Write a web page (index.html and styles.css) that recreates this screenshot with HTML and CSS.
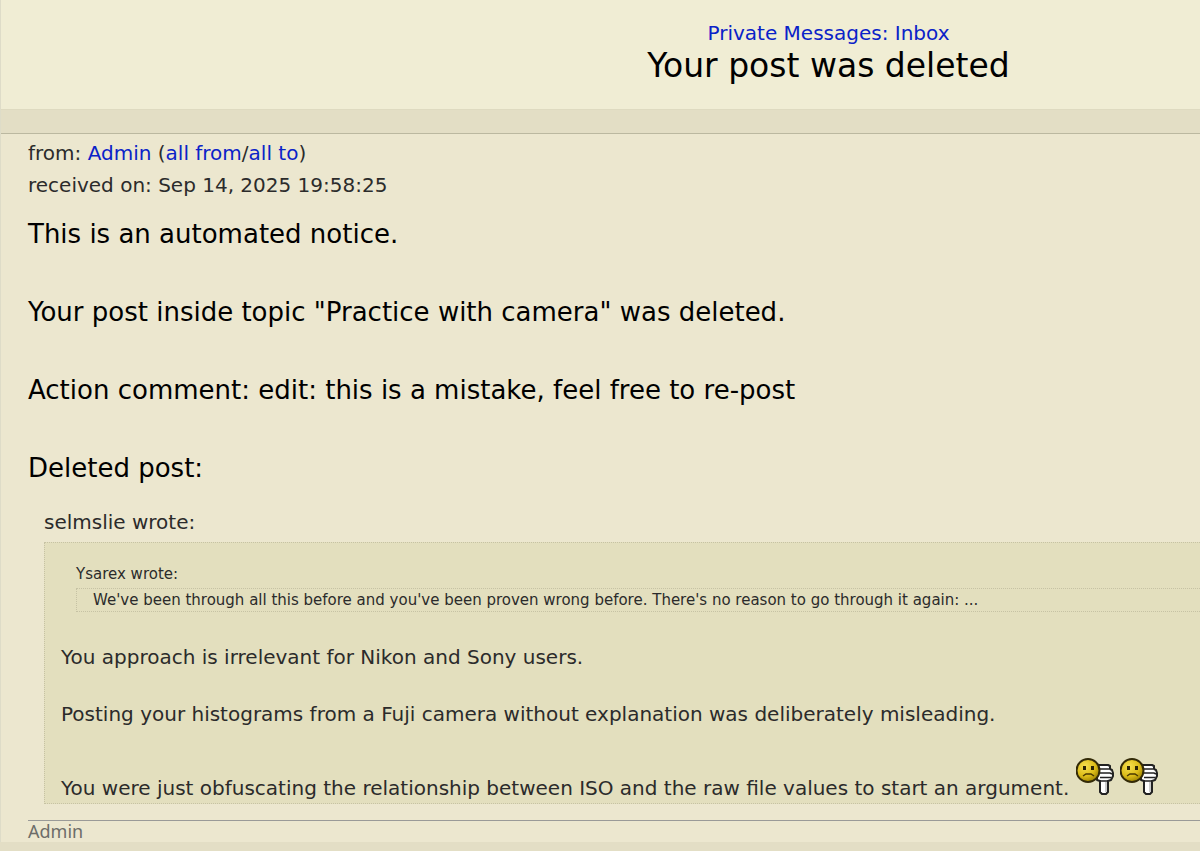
FILE: index.html
```html
<!DOCTYPE html>
<html lang="en">
<head>
<meta charset="utf-8">
<title>Your post was deleted</title>
<link rel="stylesheet" href="styles.css">
</head>
<body>
<svg class="sprites" aria-hidden="true">
  <defs>
    <radialGradient id="face" cx="38%" cy="32%" r="72%">
      <stop offset="0" stop-color="#f6e050"/>
      <stop offset="0.6" stop-color="#dcbc18"/>
      <stop offset="1" stop-color="#9a8000"/>
    </radialGradient>
    <symbol id="thumbs-down" viewBox="0 0 38 39">
      <path d="M21 8h11l2 1v3l2 1 1 3v3l-2 4-3 1v11l-2 2h-4l-2-2V24l-3-1V8z" fill="#fff" stroke="#222" stroke-width="2" stroke-linejoin="round"/>
      <path d="M21 12h12M22 16h12l2 1M24 20.500h11M23 24h9" fill="none" stroke="#222" stroke-width="1.500"/>
      <path d="M30 25v10" stroke="#bbb" stroke-width="1.500"/>
      <circle cx="12" cy="13.500" r="11.500" fill="url(#face)" stroke="#332a08" stroke-width="2"/>
      <path d="M7 9h3v4H7zM15 9h3v4h-3z" fill="#2b2305"/>
      <path d="M7 19l3-2h5l3 2" fill="none" stroke="#4a3900" stroke-width="1.500"/>
    </symbol>
  </defs>
</svg>
<div class="page">
  <header class="header">
    <a class="crumb" href="#inbox">Private Messages: Inbox</a>
    <h1 class="title">Your post was deleted</h1>
  </header>
  <div class="strip"></div>
  <main class="message">
    <div class="meta">
      <div>from: <a href="#admin">Admin</a> (<a href="#from">all from</a>/<a href="#to">all to</a>)</div>
      <div>received on: Sep 14, 2025 19:58:25</div>
    </div>
    <div class="notice">
      <p>This is an automated notice.</p>
      <p>Your post inside topic "Practice with camera" was deleted.</p>
      <p>Action comment: edit: this is a mistake, feel free to re-post</p>
      <p>Deleted post:</p>
    </div>
    <div class="quoted">
      <div class="author">selmslie wrote:</div>
      <blockquote class="quote">
        <div class="nested">
          <div>Ysarex wrote:</div>
          <blockquote class="nested-quote">We've been through all this before and you've been proven wrong before. There's no reason to go through it again: ...</blockquote>
        </div>
        <div class="reply">
          <p>You approach is irrelevant for Nikon and Sony users.</p>
          <p>Posting your histograms from a Fuji camera without explanation was deliberately misleading.</p>
          <p>You were just obfuscating the relationship between ISO and the raw file values to start an argument. <svg class="emote" role="img" aria-label="thumbs down"><use href="#thumbs-down"/></svg> <svg class="emote" role="img" aria-label="thumbs down"><use href="#thumbs-down"/></svg></p>
        </div>
      </blockquote>
    </div>
    <footer class="signature">Admin</footer>
  </main>
</div>
</body>
</html>
```
FILE: styles.css
```css
* { box-sizing: border-box; }
body {
  margin: 0;
  background: #e3dec5;
  color: #2b2b2b;
  font: 20px/29px Verdana, "DejaVu Sans", sans-serif;
  overflow-x: hidden;
}
p, h1, blockquote { margin: 0; }
a { color: #0a22c8; text-decoration: none; }
.sprites { position: absolute; width: 0; height: 0; }
.page { border-left: 1px solid #dedcc8; }
.header {
  padding: 20px 0 24px 456px;
  background: #f0edd4;
  text-align: center;
  white-space: nowrap;
}
.crumb { display: block; line-height: 26px; }
.title {
  color: #000;
  font-size: 33px;
  font-weight: normal;
  line-height: 39px;
}
.strip {
  height: 25px;
  background: #e3dec5;
  border-top: 1px solid #dedac0;
  border-bottom: 1px solid #bbb8a0;
}
.message { padding: 3px 0 0 27px; background: #ece7cf; }
.meta { line-height: 32px; }
.notice {
  display: grid;
  gap: 39px;
  padding-top: 14px;
  color: #000;
  font-size: 26px;
  line-height: 39px;
}
.quoted { padding: 20px 0 16px 16px; }
.quote {
  display: grid;
  gap: 31px;
  margin-top: 5px;
  padding: 20px 0 0 16px;
  background: #e3dfbe;
  border: 1px dotted #c6c2a4;
  border-right: 0;
}
.nested {
  padding-left: 15px;
  font: 15px/22px Verdana, "DejaVu Sans", sans-serif;
}
.nested-quote {
  margin-top: 3px;
  padding-left: 16px;
  border: 1px dotted #c6c2a4;
  border-right: 0;
}
.reply { display: grid; gap: 28px; }
.emote { width: 38px; height: 39px; vertical-align: -1px; }
.signature {
  border-top: 1px solid #9a9a98;
  color: #6d6d69;
  font: 18px/21px "Noto Sans", sans-serif;
}
```
